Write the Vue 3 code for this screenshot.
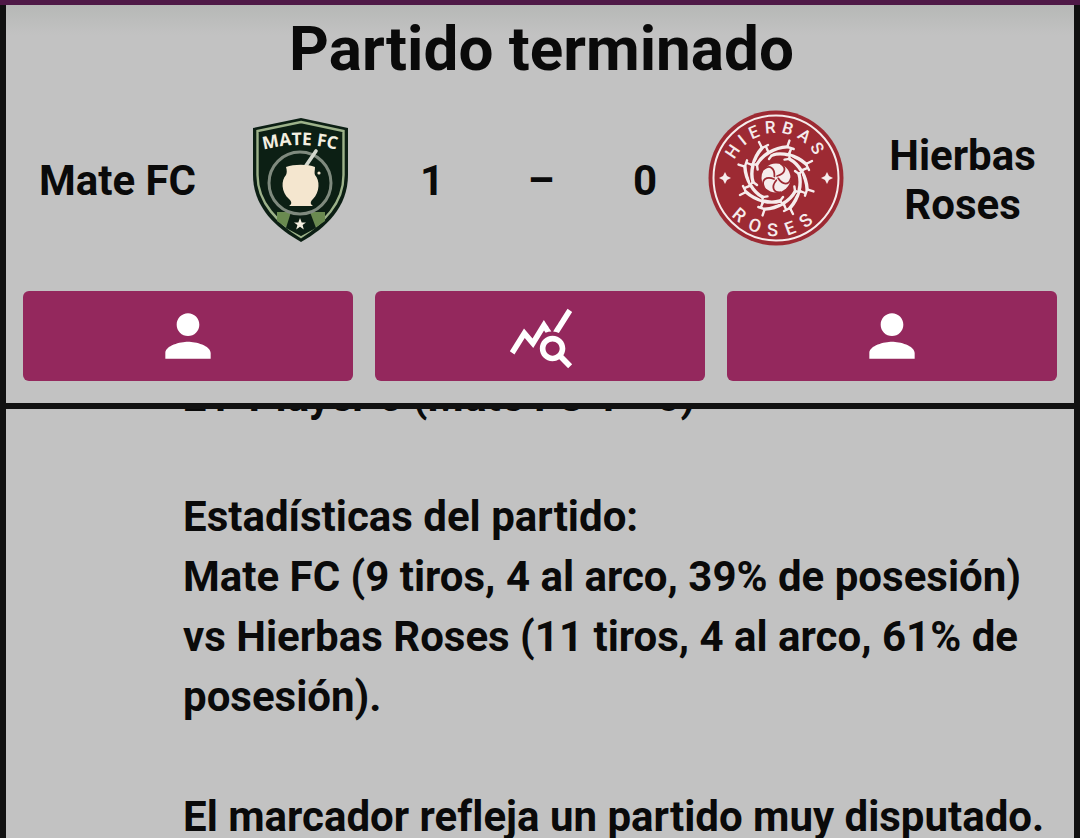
<script setup>
const branches = [0, 45, 90, 135, 180, 225, 270, 315]
const petals = [0, 72, 144, 216, 288]
const person = 'M12 12c2.21 0 4-1.79 4-4s-1.79-4-4-4-4 1.79-4 4 1.79 4 4 4zm0 2c-2.67 0-8 1.34-8 4v2h16v-2c0-2.66-5.33-4-8-4z'
const stats = 'M19.88,18.47c0.44-0.7,0.7-1.51,0.7-2.39c0-2.49-2.01-4.5-4.5-4.5s-4.5,2.01-4.5,4.5s2.01,4.5,4.49,4.5c0.88,0,1.7-0.26,2.39-0.7L21.58,23L23,21.58L19.88,18.47z M16.08,18.58c-1.38,0-2.5-1.12-2.5-2.5c0-1.38,1.12-2.5,2.5-2.5s2.5,1.12,2.5,2.5C18.58,17.46,17.46,18.58,16.08,18.58z M15.72,10.08c-0.74,0.02-1.45,0.18-2.1,0.45l-0.55-0.83l-3.8,6.18l-3.01-3.52l-3.63,5.81L1,17l5-8l3,3.5L13,6C13,6,15.72,10.08,15.72,10.08z M18.31,10.58c-0.64-0.28-1.33-0.45-2.05-0.49c0,0,5.12-8.09,5.12-8.09L23,3.18L18.31,10.58z'
</script>

<template>
  <div class="page">
    <div class="topbar"></div>
    <div class="frame">
      <header class="head">
        <h1 class="title">Partido terminado</h1>
        <div class="match">
          <div class="name">Mate FC</div>
          <div class="crest">
            <svg class="mate" viewBox="0 0 100 130" width="100" height="130">
              <path d="M51 3 L98 13 V60 C98 92 76 113 51 127 C26 113 3 92 3 60 V13 Z" fill="#0c1f14" />
              <path d="M51 7 L93.5 16 V60 C93.5 89 73 108 51 122 C29 108 7.5 89 7.5 60 V16 Z" fill="none" stroke="#9db28a" stroke-width="2.4" />
              <path d="M27 97 H75 V106 C68 111 60 116 51 121 C42 116 34 111 27 106 Z" fill="#6a8a50" />
              <path d="M36 113 L41 97 H60 L66 113 L51 121 Z" fill="#0c1f14" />
              <polygon points="50,103 51.7,107.4 56,107.4 52.6,110 53.8,114.5 50,111.8 46.2,114.5 47.4,110 44,107.4 48.3,107.4" fill="#f4efe0" />
              <defs><path id="mateArc" d="M12 35 Q50 25 88 35" /></defs>
              <text class="mate-text"><textPath href="#mateArc" startOffset="50%" text-anchor="middle">MATE FC</textPath></text>
              <circle cx="50" cy="68" r="31" fill="none" stroke="#7f8a7e" stroke-width="3" />
              <path d="M66 36 L53 55" stroke="#d3d7cd" stroke-width="3.6" stroke-linecap="round" />
              <path d="M36 52 C44 49 58 49 65 52 C65 55 64 58 65 60 C70 65 70 77 63 84 C60 87 60 89 63 91 H39 C42 89 42 87 39 84 C31 77 31 65 36 60 C37 58 37 55 36 52 Z" fill="#f4e6cf" />
              <circle cx="69" cy="58" r="1.6" fill="#f4e6cf" />
            </svg>
          </div>
          <div class="score">1</div>
          <div class="score">–</div>
          <div class="score">0</div>
          <div class="crest rose">
            <svg viewBox="-70 -70 140 140" width="140" height="140">
              <circle r="67.5" fill="#9d2a33" />
              <circle r="62.5" fill="none" stroke="#f6ecec" stroke-width="2" />
              <defs>
                <path id="arcTop" d="M -45 0 A 45 45 0 0 1 45 0" />
                <path id="arcBottom" d="M -58 0 A 58 58 0 0 0 58 0" />
              </defs>
              <text class="rose-text"><textPath href="#arcTop" startOffset="50%" text-anchor="middle">HIERBAS</textPath></text>
              <text class="rose-text rose-low"><textPath href="#arcBottom" startOffset="50%" text-anchor="middle">ROSES</textPath></text>
              <path d="M-51 -6 L-49 -2 L-45 0 L-49 2 L-51 6 L-53 2 L-57 0 L-53 -2 Z" fill="#f6ecec" />
              <path d="M51 -6 L53 -2 L57 0 L53 2 L51 6 L49 2 L45 0 L49 -2 Z" fill="#f6ecec" />
              <g v-for="a in branches" :key="a" :transform="`rotate(${a})`">
                <path d="M-4 -23 C6 -26 20 -23 30 -14" fill="none" stroke="#9d2a33" stroke-width="5.4" stroke-linecap="round" />
                <path d="M-4 -23 C6 -26 20 -23 30 -14" fill="none" stroke="#f6ecec" stroke-width="3.4" stroke-linecap="round" />
                <path d="M30 -14 L36 -17 M30 -14 L33 -8 M-4 -23 L-8 -27 M-4 -23 L-7 -19 M13 -24 L15 -29" stroke="#f6ecec" stroke-width="2.4" stroke-linecap="round" />
              </g>
              <circle r="14.5" fill="#f6ecec" />
              <g v-for="a in petals" :key="a" :transform="`rotate(${a})`">
                <path d="M1 -2 C9 -4 11 -10 5 -14" fill="none" stroke="#9d2a33" stroke-width="1.8" stroke-linecap="round" />
              </g>
            </svg>
          </div>
          <div class="name">Hierbas Roses</div>
        </div>
        <div class="actions">
          <button class="btn"><svg viewBox="0 0 24 24" width="68" height="68"><path :d="person" fill="#fff" /></svg></button>
          <button class="btn"><svg class="stats" viewBox="0 0 24 24" width="68" height="68"><path :d="stats" fill="#fff" /></svg></button>
          <button class="btn"><svg viewBox="0 0 24 24" width="68" height="68"><path :d="person" fill="#fff" /></svg></button>
        </div>
      </header>
      <div class="scroller">
        <div class="report">
          <p class="para">21' Player 6 (Mate FC 1 - 0)</p>
          <p class="para">Estadísticas del partido:<br />Mate FC (9 tiros, 4 al arco, 39% de posesión) vs Hierbas Roses (11 tiros, 4 al arco, 61% de posesión).</p>
          <p class="para">El marcador refleja un partido muy disputado.</p>
        </div>
      </div>
    </div>
  </div>
</template>

<style>
html, body { margin: 0; background: #111; }
</style>

<style scoped>
.page {
  width: 1080px;
  height: 838px;
  display: flex;
  flex-direction: column;
  overflow: hidden;
  background: #111;
  font-family: Roboto, "Liberation Sans", sans-serif;
  font-variant-ligatures: none;
  color: #0a0a0a;
}
.topbar { height: 5px; flex: none; background: #4f1a47; }
.frame {
  flex: 1;
  min-height: 0;
  margin: 0 6px;
  display: flex;
  flex-direction: column;
  background: #c2c2c2;
}
.head {
  flex: none;
  height: 404px;
  box-sizing: border-box;
  padding: 0 17px;
  border-bottom: 6px solid #111;
  background: linear-gradient(#b6b8b6, #c2c2c2 30px);
}
.title {
  margin: 0;
  height: 88px;
  padding-left: 3px;
  line-height: 88px;
  text-align: center;
  font-size: 62px;
  font-weight: 700;
}
.match {
  display: grid;
  grid-template-columns: 189px 176px 88px 130px 78px 184px 189px;
  height: 150px;
  margin-top: 12px;
  align-items: center;
  text-align: center;
  font-size: 42px;
  font-weight: 700;
  line-height: 49px;
}
.crest { display: flex; justify-content: center; align-items: center; }
.rose { margin-bottom: 4px; }
.mate-text { font-family: "Open Sans", sans-serif; font-weight: 700; font-size: 17.5px; fill: #f4efe0; }
.rose-text { font-family: Roboto, sans-serif; font-weight: 500; font-size: 17px; letter-spacing: 5px; fill: #f6ecec; }
.rose-low { font-size: 18px; letter-spacing: 9px; }
.actions {
  display: grid;
  grid-template-columns: repeat(3, 330px);
  gap: 22px;
  margin-top: 36px;
}
.btn {
  height: 90px;
  padding: 0;
  border: 0;
  border-radius: 6px;
  background: #94285d;
  display: flex;
  align-items: center;
  justify-content: center;
}
.stats { margin: 1px 0 0 1px; }
.scroller { flex: 1; min-height: 0; overflow: hidden; }
.report {
  margin-top: -42px;
  padding: 0 16px 0 177px;
  font-size: 42px;
  font-weight: 700;
  line-height: 60px;
}
.para { margin: 0 0 60px; }
</style>
